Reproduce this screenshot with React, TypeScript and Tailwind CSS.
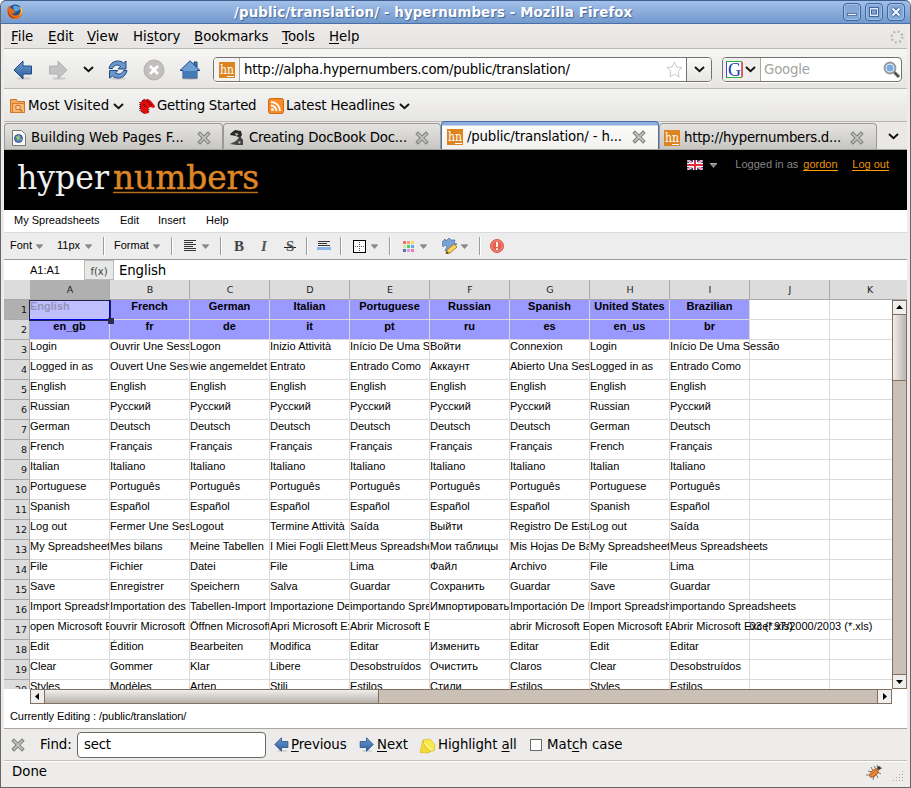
import React from "react";

const columns = ["A", "B", "C", "D", "E", "F", "G", "H", "I", "J", "K"];

const rows: string[][] = [
  ["English", "French", "German", "Italian", "Portuguese", "Russian", "Spanish", "United States", "Brazilian"],
  ["en_gb", "fr", "de", "it", "pt", "ru", "es", "en_us", "br"],
  ["Login", "Ouvrir Une Session", "Logon", "Inizio Attività", "Início De Uma Sessão", "Войти", "Connexion", "Login", "Início De Uma Sessão"],
  ["Logged in as", "Ouvert Une Session", "wie angemeldet", "Entrato", "Entrado Como", "Аккаунт", "Abierto Una Sesión", "Logged in as", "Entrado Como"],
  ["English", "English", "English", "English", "English", "English", "English", "English", "English"],
  ["Russian", "Русский", "Русский", "Русский", "Русский", "Русский", "Русский", "Russian", "Русский"],
  ["German", "Deutsch", "Deutsch", "Deutsch", "Deutsch", "Deutsch", "Deutsch", "German", "Deutsch"],
  ["French", "Français", "Français", "Français", "Français", "Français", "Français", "French", "Français"],
  ["Italian", "Italiano", "Italiano", "Italiano", "Italiano", "Italiano", "Italiano", "Italian", "Italiano"],
  ["Portuguese", "Português", "Português", "Português", "Português", "Português", "Português", "Portuguese", "Português"],
  ["Spanish", "Español", "Español", "Español", "Español", "Español", "Español", "Spanish", "Español"],
  ["Log out", "Fermer Une Session", "Logout", "Termine Attività", "Saída", "Выйти", "Registro De Estancias", "Log out", "Saída"],
  ["My Spreadsheets", "Mes bilans", "Meine Tabellen", "I Miei Fogli Elettronici", "Meus Spreadsheets", "Мои таблицы", "Mis Hojas De Balance", "My Spreadsheets", "Meus Spreadsheets"],
  ["File", "Fichier", "Datei", "File", "Lima", "Файл", "Archivo", "File", "Lima"],
  ["Save", "Enregistrer", "Speichern", "Salva", "Guardar", "Сохранить", "Guardar", "Save", "Guardar"],
  ["Import Spreadsheets", "Importation des Bilans", "Tabellen-Import", "Importazione Dei Fogli", "importando Spreadsheets", "Импортировать", "Importación De Hojas", "Import Spreadsheets", "importando Spreadsheets"],
  ["open Microsoft Excel 97/2000/2003 (*.xls)", "ouvrir Microsoft Excel", "Öffnen Microsoft Excel", "Apri Microsoft Excel", "Abrir Microsoft Excel", "", "abrir Microsoft Excel", "open Microsoft Excel", "Abrir Microsoft Excel 97/2000/2003 (*.xls)"],
  ["Edit", "Édition", "Bearbeiten", "Modifica", "Editar", "Изменить", "Editar", "Edit", "Editar"],
  ["Clear", "Gommer", "Klar", "Libere", "Desobstruídos", "Очистить", "Claros", "Clear", "Desobstruídos"],
  ["Styles", "Modèles", "Arten", "Stili", "Estilos", "Стили", "Estilos", "Styles", "Estilos"],
];

function Key({ children }: { children: string }) {
  return <span className="underline decoration-1 underline-offset-2">{children}</span>;
}

function Chevron() {
  return (
    <svg className="shrink-0" width="11" height="7" viewBox="0 0 11 7">
      <path d="M1 1l4.500 4.200L10 1" fill="none" stroke="#111" strokeWidth="1.900" />
    </svg>
  );
}

function Tri() {
  return (
    <svg className="shrink-0" width="7" height="5" viewBox="0 0 7 5">
      <path d="M0 0h7v1L3.500 5 0 1z" fill="#888" />
      <path d="M0 .5h7" stroke="#aaa" />
    </svg>
  );
}

function Cross() {
  return (
    <svg className="shrink-0" width="14" height="14" viewBox="0 0 14 14">
      <path d="M3 3l8 8M11 3l-8 8" stroke="#7c7e78" strokeWidth="3.800" strokeLinecap="square" />
      <path d="M3 3l8 8M11 3l-8 8" stroke="#bfc1bc" strokeWidth="1.800" strokeLinecap="square" />
    </svg>
  );
}

function Hn() {
  return (
    <svg className="shrink-0" width="16" height="16" viewBox="0 0 16 16">
      <rect width="16" height="16" fill="#db8420" />
      <text x="1" y="12" fontFamily="DejaVu Serif" fontSize="12" fill="#fff" textLength="14" lengthAdjust="spacingAndGlyphs">hn</text>
      <path d="M8 14.500h7" stroke="#fff" />
    </svg>
  );
}

function Arrow({ right, gray, size }: { right?: boolean; gray?: boolean; size: number }) {
  return (
    <svg className="shrink-0" width={size} height={size} viewBox="0 0 20 20">
      <defs>
        <linearGradient id="arrowBlue" x1="0" y1="0" x2="0" y2="1">
          <stop offset="0" stopColor="#6d9bd0" />
          <stop offset="1" stopColor="#2c5e9f" />
        </linearGradient>
      </defs>
      <ellipse cx="11" cy="18.500" rx="7" ry="1.300" fill="#000" opacity=".12" />
      <path
        d="M1 10l9-9v5h8.500v8H10v5z"
        transform={right ? "translate(20 0) scale(-1 1)" : undefined}
        fill={gray ? "#c2c2c2" : "url(#arrowBlue)"}
        stroke={gray ? "#b2b2b2" : "#204a87"}
      />
    </svg>
  );
}

function Firefox() {
  return (
    <svg width="16" height="16" viewBox="0 0 16 16">
      <circle cx="8" cy="7.500" r="7" fill="#234f91" />
      <path d="M6 2c3-1 6 0 7 3-1 2-4 3-6 2z" fill="#58a5da" />
      <path d="M1 3C-1 9 2 15 8 15c5 0 8-4 7-9l-1-3c0 3 0 6-3 8-3 1-6 0-6-2 2 1 3 0 4-1-3 0-2-2-3-3C4 5 3 4 3 2 1 2 1 3 1 3z" fill="#e86a14" />
      <path d="M12 3c3 3 2 7-1 9 4-1 5-5 4-7-1-2-2-2-3-2z" fill="#ffc936" />
      <path d="M1 5c0 5 3 8 7 9-5 1-8-4-7-9z" fill="#a92f0b" />
    </svg>
  );
}

function Refresh() {
  return (
    <svg width="20" height="20" viewBox="0 0 20 20">
      <ellipse cx="10" cy="18.700" rx="8" ry="1.200" fill="#000" opacity=".12" />
      <g fill="#6a98cd" stroke="#204a87" strokeLinejoin="round">
        <path d="M1 8.500C2 4 5 1 10 1c2 0 4 .7 5.500 2L18 1v8h-8l2.600-2.600C9 4 6 5 4.500 8.500z" />
        <path d="M19 10.500C18 15 15 18 10 18c-2 0-4-.7-5.500-2L1.500 18v-7.500H10L7.400 13c3.600 2 6.600 1 8.100-2.500z" />
      </g>
    </svg>
  );
}

function Home() {
  return (
    <svg width="22" height="20" viewBox="0 0 22 20">
      <ellipse cx="11" cy="18.800" rx="9" ry="1.100" fill="#000" opacity=".15" />
      <path d="M15 2h3v5l-3-3z" fill="#457ab9" stroke="#204a87" />
      <path d="M1 10.500L11 .8l10 9.700h-3V18H4v-7.500z" fill="#6e9ed4" stroke="#204a87" />
      <path d="M5 11h12v6H5z" fill="#4279b9" />
    </svg>
  );
}

function Search() {
  return (
    <svg width="18" height="18" viewBox="0 0 18 18">
      <path d="M10 10l6 6" stroke="#555" strokeWidth="3" />
      <circle cx="7" cy="7" r="5.500" fill="#8fb9e3" stroke="#999" strokeWidth="1.800" />
      <circle cx="7" cy="7" r="4" fill="#7aabe0" stroke="#d8eafa" />
    </svg>
  );
}

function Feed() {
  return (
    <svg width="16" height="16" viewBox="0 0 16 16">
      <rect x=".5" y=".5" width="15" height="15" rx="2" fill="#f68b28" stroke="#cf6812" />
      <path d="M3 4c5 0 9 4 9 9M3 7.500c3 0 5.500 2.500 5.500 5.500" fill="none" stroke="#fff" strokeWidth="1.800" />
      <circle cx="4.500" cy="11.500" r="1.500" fill="#fff" />
    </svg>
  );
}

function Tab({ icon, text, active, w, textW }: { icon: React.ReactNode; text: string; active?: boolean; w: string; textW: string }) {
  return (
    <div
      className={
        "flex shrink-0 items-center overflow-hidden rounded-t-[4px] border border-b-0 " + w +
        (active
          ? " h-[28px] border-[#4b6fa5] bg-[linear-gradient(#8db0e1_0_3px,#fcfcfb_4px,#f1f0ee)] pl-[5px] pt-[3px]"
          : " h-[26px] border-[#9b9a96] bg-linear-to-b from-[#e5e4e2] to-[#c8c6c2] pl-[5px] pt-[2px]")
      }
    >
      {icon}
      <span className={"ml-[4px] shrink-0 whitespace-nowrap " + textW}>{text}</span>
      <Cross />
    </div>
  );
}

function TitleButton({ children }: { children: React.ReactNode }) {
  return (
    <div className="flex h-[18px] w-[18px] items-center justify-center rounded-[4px] border border-[#3d669f] bg-[#84a7d8] shadow-[inset_0_0_0_1px_#a3c0e8]">
      <svg width="12" height="12" viewBox="0 0 12 12">{children}</svg>
    </div>
  );
}

function TitleBar() {
  return (
    <div className="flex h-[24px] items-center rounded-t-[5px] border-b border-t border-b-[#4a6ea5] border-t-[#3f5f8f] bg-linear-to-b from-[#a2c0e9] to-[#7399cd] pl-[6px] pr-[5px]">
      <Firefox />
      <div className="grow whitespace-nowrap pl-[211px] pt-[2px] text-[13.33px] font-bold tracking-[0.12px] text-white [text-shadow:1px_1px_1px_#41669b]">
        /public/translation/ - hypernumbers - Mozilla Firefox
      </div>
      <div className="flex gap-[4px]">
        <TitleButton><rect x="1.500" y="7.500" width="9" height="2" fill="#eef5ff" stroke="#41669b" strokeWidth=".8" /></TitleButton>
        <TitleButton>
          <rect x="1.500" y="1.500" width="9" height="9" fill="#dbe9fb" stroke="#41669b" />
          <rect x="3.500" y="4" width="5" height="4" fill="#84a7d8" stroke="#41669b" />
        </TitleButton>
        <TitleButton>
          <path d="M2.500 2.500l7 7M9.500 2.500l-7 7" stroke="#41669b" strokeWidth="4" />
          <path d="M2.500 2.500l7 7M9.500 2.500l-7 7" stroke="#eef5ff" strokeWidth="2.200" />
        </TitleButton>
      </div>
    </div>
  );
}

function MenuBar() {
  return (
    <div className="flex h-[25px] items-center border-b border-[#b9b8b5] bg-linear-to-b from-[#ecebea] to-[#e6e5e3] pl-[7px] pr-[3px] pt-[2px]">
      <span className="w-[37px]"><Key>F</Key>ile</span>
      <span className="w-[39px]"><Key>E</Key>dit</span>
      <span className="w-[46px]"><Key>V</Key>iew</span>
      <span className="w-[61px]">Hi<Key>s</Key>tory</span>
      <span className="w-[88px]"><Key>B</Key>ookmarks</span>
      <span className="w-[47px]"><Key>T</Key>ools</span>
      <span className="grow"><Key>H</Key>elp</span>
      <svg width="14" height="14" viewBox="0 0 14 14">
        <circle cx="7" cy="7" r="5.400" fill="none" stroke="#b5b4b2" strokeWidth="2.400" strokeDasharray="1.800 2.441" />
      </svg>
    </div>
  );
}

function NavBar() {
  return (
    <div className="flex h-[40px] items-center border-b border-[#b9b8b5] bg-linear-to-b from-[#f6f6f5] to-[#e6e5e3] pl-[9px] pt-[2px]">
      <div className="flex w-[35px]"><Arrow size={20} /></div>
      <div className="flex w-[35px]"><Arrow size={20} right gray /></div>
      <div className="flex w-[25px]"><Chevron /></div>
      <div className="flex w-[35px]"><Refresh /></div>
      <div className="flex w-[36px]">
        <svg width="22" height="22" viewBox="0 0 22 22">
          <circle cx="11" cy="11" r="10" fill="#c3bfbf" stroke="#b3afaf" />
          <path d="M7 7l8 8M15 7l-8 8" stroke="#fff" strokeWidth="2.600" />
        </svg>
      </div>
      <div className="flex w-[34px]"><Home /></div>
      <div className="flex h-[25px] w-[499px] items-center overflow-hidden rounded-[4px] border border-[#73726e] bg-white shadow-[0_1px_0_#fff]">
        <div className="flex h-full w-[26px] items-center border-r border-[#a8a7a4] bg-[#f4f3f1] pl-[5px]"><Hn /></div>
        <div className="grow whitespace-nowrap pl-[4px] tracking-[-0.235px]">http://alpha.hypernumbers.com/public/translation/</div>
        <svg className="mr-[3px]" width="17" height="17" viewBox="0 0 17 17">
          <path d="M8.500 1l2.300 5 5.200.6-4 3.700 1.200 5.500-4.700-2.700-4.700 2.700L5 10.300 1 6.600 6.200 6z" fill="#fff" stroke="#c8c8c8" />
        </svg>
        <div className="flex h-full w-[25px] items-center justify-center border-l border-[#73726e] bg-linear-to-b from-[#f9f9f8] to-[#e8e7e5]"><Chevron /></div>
      </div>
      <div className="ml-[10px] flex h-[25px] w-[180px] items-center overflow-hidden rounded-[4px] border border-[#73726e] bg-white shadow-[0_1px_0_#fff]">
        <div className="flex h-full w-[38px] items-center gap-[2px] border-r border-[#a8a7a4] bg-[#efeeec] pl-[3px]">
          <svg width="17" height="17" viewBox="0 0 17 17">
            <rect x="1" y="1" width="15" height="15" fill="#fff" />
            <path d="M.5 1v15" stroke="#2c55c8" /><path d="M0 .5h16M0 16.500h16" stroke="#2fae34" /><path d="M16 1v15" stroke="#cf3030" strokeWidth="1.500" />
            <text x="2" y="14.500" fontFamily="Liberation Serif" fontSize="18" fill="#163bb2">G</text>
          </svg>
          <Chevron />
        </div>
        <span className="grow pl-[3px] tracking-[-0.2px] text-[#a4a3a1]">Google</span>
        <Search />
      </div>
    </div>
  );
}

function BookmarkBar() {
  return (
    <div className="flex h-[33px] items-center border-b border-[#b9b8b5] bg-linear-to-b from-[#f4f4f3] to-[#e6e5e3] pl-[6px] pt-[2px]">
      <svg width="16" height="16" viewBox="0 0 16 16">
        <path d="M.500 14.500V1.500h6l1 2h7v11z" fill="#f3aa5b" stroke="#c9742b" />
        <rect x="2.500" y="5.500" width="12" height="9" fill="#f7b871" stroke="#c9742b" strokeWidth=".8" />
        <circle cx="8" cy="9.500" r="2.300" fill="#fbd5a8" stroke="#c9651b" /><path d="M10 11.500l2 2" stroke="#c9651b" strokeWidth="1.500" />
      </svg>
      <span className="ml-[2px] w-[85px]">Most Visited</span>
      <div className="flex w-[26px]"><Chevron /></div>
      <svg width="17" height="16" viewBox="0 0 17 16">
        <path d="M1 5l3-3 5-1 3 2 4 5-1 2-4-1-2 2 1 4-5 1-4-5z" fill="#e00b0b" />
        <path d="M1 4v9l4 2M3 3l3-2M9 14l1-3M8 3l3 3 2 1M5 6l1 3" fill="none" stroke="#2b0000" strokeWidth="1.200" strokeDasharray="1 1" />
      </svg>
      <span className="ml-px w-[111px] whitespace-nowrap tracking-[-0.25px]">Getting Started</span>
      <Feed />
      <span className="ml-[2px] w-[113px] whitespace-nowrap tracking-[-0.15px]">Latest Headlines</span>
      <Chevron />
    </div>
  );
}

function TabBar() {
  return (
    <div className="flex h-[28px] items-end border-b border-[#a3a29e] bg-[#e9e8e6]">
      <Tab w="w-[219px]" textW="w-[166px] tracking-[-0.02px]" text="Building Web Pages F..." icon={
        <svg className="ml-px shrink-0" width="16" height="16" viewBox="0 0 16 16">
          <path d="M1.500.500h9l4 4v11h-13z" fill="#fafafa" stroke="#777" />
          <circle cx="7.500" cy="8.500" r="4" fill="#527db8" stroke="#355a91" /><path d="M5 7l3-2 1 3-2 3zM9 9l2 0-1 2z" fill="#9bc86c" />
        </svg>
      } />
      <Tab w="w-[218px]" textW="w-[166px] tracking-[-0.2px]" text="Creating DocBook Doc..." icon={
        <svg className="shrink-0" width="16" height="16" viewBox="0 0 16 16">
          <path d="M2 3l4-3 6 1 1 4-2 3-4-2-6-1z" fill="#282828" />
          <path d="M4 13l4-3 3-4 3 4v5H7zM1 14l4-2 3 3z" fill="#444" /><path d="M6 3l4 1-3 2zM9 11l3 1-2 2z" fill="#bcbcbc" />
        </svg>
      } />
      <Tab w="w-[218px]" textW="w-[165px] tracking-[-0.18px]" active text="/public/translation/ - h..." icon={<Hn />} />
      <Tab w="w-[218px]" textW="w-[166px] tracking-[-0.27px]" text="http://hypernumbers.d..." icon={<span className="-ml-px"><Hn /></span>} />
      <div className="flex h-full grow items-center justify-center pl-[2px] pt-px"><Chevron /></div>
    </div>
  );
}

function Header() {
  return (
    <div className="flex h-[60px] justify-between bg-black pl-[13px] pr-[18px] text-[11px] text-[#868686]">
      <svg className="mt-[6px]" width="250" height="50" viewBox="0 0 250 50">
        <text x="0" y="33" fontFamily="DejaVu Serif" fontSize="33" fill="#f0f0f0" textLength="92" lengthAdjust="spacingAndGlyphs">hyper</text>
        <text x="96" y="33" fontFamily="DejaVu Serif" fontSize="33" fill="#de8526" stroke="#de8526" strokeWidth=".5" textLength="146" lengthAdjust="spacingAndGlyphs">numbers</text>
        <path d="M96 36.500h145" stroke="#b76d1e" strokeWidth="1.500" />
      </svg>
      <div className="flex h-[28px] items-center">
        <svg className="mt-px" width="16" height="10" viewBox="0 0 16 10">
          <rect width="16" height="10" fill="#283b87" />
          <path d="M0 0l16 10M16 0L0 10" stroke="#fff" strokeWidth="2.200" />
          <path d="M0 0l16 10M16 0L0 10" stroke="#d84050" strokeWidth=".8" />
          <path d="M8 0v10M0 5h16" stroke="#fff" strokeWidth="4" /><path d="M8 0v10M0 5h16" stroke="#dc3040" strokeWidth="2" />
        </svg>
        <span className="ml-[7px] mt-[2px]"><Tri /></span>
        <span className="ml-[18px] w-[68px]">Logged in as</span>
        <span className="w-[49px]"><span className="border-b border-[#f90] leading-[12px] text-[#e8950f]">gordon</span></span>
        <span><span className="border-b border-[#f90] leading-[12px] text-[#e8950f]">Log out</span></span>
      </div>
    </div>
  );
}

function Separator() {
  return <span className="h-[18px] w-[2px] border-l border-[#9b9b9b] bg-white" />;
}

function Toolbar() {
  return (
    <div className="flex h-[28px] items-center border-b border-t border-b-[#999] border-t-[#dadada] bg-[#ededed] pl-[6px]">
      <span className="-mt-[2px] w-[26px]">Font</span><Tri />
      <span className="-mt-[2px] ml-[14px] w-[28px]">11px</span><Tri />
      <span className="ml-[11px] flex w-[11px]"><Separator /></span>
      <span className="-mt-[2px] w-[39px]">Format</span><Tri />
      <span className="ml-[11px] flex w-[13px]"><Separator /></span>
      <svg width="13" height="12" viewBox="0 0 13 12"><path d="M0 .500h12M0 2.500h9M0 4.500h12M0 6.500h9M0 8.500h12M0 10.500h12" stroke="#333" /></svg>
      <span className="ml-[5px]"><Tri /></span>
      <span className="ml-[11px] flex w-[14px]"><Separator /></span>
      <span className="w-[27px] font-['Liberation_Serif',serif] text-[15px] font-bold text-[#444]">B</span>
      <span className="w-[23px] font-['Liberation_Serif',serif] text-[15px] font-bold italic text-[#555]">I</span>
      <span className="flex w-[22px]">
        <span className="bg-[linear-gradient(#222,#222)] bg-[length:100%_1px] bg-[position:0_10px] bg-no-repeat px-[2px] font-['Liberation_Serif',serif] text-[15px] font-bold text-[#555]">S</span>
      </span>
      <span className="flex w-[11px]"><Separator /></span>
      <svg width="14" height="10" viewBox="0 0 14 10"><path d="M1 .500h12M1 2.500h9M1 4.500h12" stroke="#333" /><rect y="6" width="14" height="3" fill="#8ab3ec" /></svg>
      <span className="ml-[9px] flex w-[13px]"><Separator /></span>
      <svg width="13" height="13" viewBox="0 0 13 13"><rect x=".500" y=".500" width="12" height="12" fill="#fff" stroke="#000" /><path d="M6.500 2v9M2 6.500h9" stroke="#555" strokeDasharray="1 1" /></svg>
      <span className="ml-[5px]"><Tri /></span>
      <span className="ml-[11px] flex w-[14px]"><Separator /></span>
      <svg width="11" height="11" viewBox="0 0 11 11">
        <path fill="#f46d6d" d="M0 0h3v3H0z" /><path fill="#f6a065" d="M4 0h3v3H4z" /><path fill="#f3d861" d="M8 0h3v3H8z" />
        <path fill="#cce9a7" d="M0 4h3v3H0z" /><path fill="#57c96b" d="M4 4h3v3H4z" /><path fill="#60aceb" d="M8 4h3v3H8z" />
        <path fill="#5177b4" d="M0 8h3v3H0z" /><path fill="#d59be4" d="M4 8h3v3H4z" /><path fill="#f675ae" d="M8 8h3v3H8z" />
      </svg>
      <span className="ml-[6px]"><Tri /></span>
      <svg className="ml-[15px]" width="16" height="16" viewBox="0 0 16 16">
        <path d="M0 4l3-3 1 2 3-3 2 2 4 0-1 3 3 1-3 2-3 0-3 4-3 1 2-5-2-1-2 2z" fill="#7aa3d3" stroke="#456f9f" strokeWidth=".7" />
        <path d="M4 16l1-4 7-6 3 3-7 6z" fill="#f6d35f" stroke="#9a6a16" strokeWidth=".8" />
        <path d="M4 16l.8-3L7 15z" fill="#5b3b10" />
      </svg>
      <span className="ml-[3px]"><Tri /></span>
      <span className="ml-[11px] flex w-[11px]"><Separator /></span>
      <svg width="14" height="14" viewBox="0 0 14 14"><circle cx="7" cy="7" r="6.500" fill="#e5604e" stroke="#d9594a" /><circle cx="7" cy="7" r="5.300" fill="none" stroke="#f4a192" strokeWidth=".8" /><path d="M7 3v5M7 9.300v1.700" stroke="#fff" strokeWidth="1.800" /></svg>
    </div>
  );
}

function ScrollTri({ d }: { d: string }) {
  return <svg width="7" height="7" viewBox="0 0 7 7"><path d={d} fill="#000" /></svg>;
}

function Sheet() {
  return (
    <div className="font-['Liberation_Sans',Arial,sans-serif] text-[11px] leading-[13px]">
      <div className="flex h-[20px] overflow-hidden border-b border-[#a9a9a9] bg-[#dcdcdc] font-['DejaVu_Sans',sans-serif] text-[9.500px] leading-[19px] text-[#222]">
        <div className="w-[26px] shrink-0 border-r border-[#dcdcdc]" />
        {columns.map((c) => (
          <div key={c} className={"w-[80px] shrink-0 border-r border-[#aaa] pl-px text-center " + (c === "A" ? "bg-[#b0b0b0]" : "")}>{c}</div>
        ))}
      </div>
      <div className="flex h-[389px]">
        <div className="relative w-[888px] overflow-hidden">
          {rows.map((row, r) => (
            <div key={r} className="flex h-[20px]">
              <div className={"h-[20px] w-[26px] shrink-0 border-b border-r border-[#aaa] pr-[2px] pt-px text-right font-['DejaVu_Sans',sans-serif] text-[9.500px] leading-[17px] text-[#111] " + (r === 0 ? "bg-[#b0b0b0]" : "bg-[#dcdcdc]")}>{r + 1}</div>
              {columns.map((c, i) => (
                <div
                  key={c}
                  className={
                    "h-[20px] w-[80px] shrink-0 whitespace-nowrap border-b border-r border-[#dadada] " +
                    (r < 2 && i < 9 ? "bg-[#9999ff] text-center font-bold " : "") +
                    (i === 8 ? "" : "overflow-hidden")
                  }
                >
                  {r === 16 && i === 9 ? <span className="-ml-[160px] tracking-[-0.02px]">open Microsoft Excel 97/2000/2003 (*.xls)</span> : r === 0 && i === 0 ? null : row[i]}
                </div>
              ))}
            </div>
          ))}
          <div className="absolute left-[25px] top-0 h-[21px] w-[82px] border border-[#222244] bg-[#bfbfff] font-bold text-[#9393b8] shadow-[inset_-1px_-1px_0_#0000d8]">
            <span className="relative -top-px">English</span>
          </div>
          <div className="absolute left-[104px] top-[18px] h-[6px] w-[6px] bg-[#2c2c50]" />
        </div>
        <div className="flex w-[15px] flex-col border border-[#7f7062] bg-[#cbc0b6]">
          <div className="flex h-[14px] items-center justify-center border-b border-[#7f7062] bg-[#f1efed]"><ScrollTri d="M0 5l3.500-4L7 5z" /></div>
          <div className="h-[66px] border-b border-[#7f7062] bg-linear-to-r from-[#efedeb] to-[#bdb6b0]" />
          <div className="grow" />
          <div className="flex h-[14px] items-center justify-center border-t border-[#7f7062] bg-[#f1efed]"><ScrollTri d="M0 2l3.500 4L7 2z" /></div>
        </div>
      </div>
      <div className="ml-[26px] flex h-[15px] w-[862px] border border-[#7f7062] bg-[#cbc0b6]">
        <div className="flex w-[14px] items-center justify-center border-r border-[#7f7062] bg-[#f1efed]"><ScrollTri d="M5 0L1 3.500 5 7z" /></div>
        <div className="w-[334px] border-r border-[#7f7062] bg-linear-to-b from-[#f0eeec] to-[#b9b2ac]" />
        <div className="grow" />
        <div className="flex w-[14px] items-center justify-center border-l border-[#7f7062] bg-[#f1efed]"><ScrollTri d="M2 0l4 3.500L2 7z" /></div>
      </div>
      <div className="h-[24px] pl-[6px] leading-[25px] tracking-[-0.07px]">Currently Editing : /public/translation/</div>
    </div>
  );
}

function FindBar() {
  return (
    <div className="flex h-[32px] items-center border-t border-[#a7a6a3] bg-[#edecea] pl-[7px]">
      <Cross />
      <span className="ml-[15px] w-[37px]">Find:</span>
      <div className="h-[26px] w-[189px] rounded-[4px] border border-[#696864] bg-white pl-[6px] leading-[23px] tracking-[-0.2px]">sect</div>
      <span className="ml-[8px] flex w-[17px]"><Arrow size={15} /></span>
      <span className="w-[68px] tracking-[-0.1px]"><Key>P</Key>revious</span>
      <span className="flex w-[18px]"><Arrow size={15} right /></span>
      <span className="w-[42px]"><Key>N</Key>ext</span>
      <svg className="mt-[2px]" width="18" height="16" viewBox="0 0 18 16">
        <path d="M1 14.500L4 2l3 7 5 4-2 2z" fill="#f3dc35" stroke="#d6b91e" strokeWidth=".7" />
        <path d="M4 2l7-1 5 6-1 6-5 0-4-5z" fill="#f8e94d" stroke="#d6b91e" strokeWidth=".7" /><path d="M5 5l8 7" stroke="#fffbd0" />
      </svg>
      <span className="ml-px w-[92px] whitespace-nowrap tracking-[-0.1px]">Highlight <Key>a</Key>ll</span>
      <span className="h-[12px] w-[12px] border border-[#696864] bg-white" />
      <span className="ml-[5px]">Mat<Key>c</Key>h case</span>
    </div>
  );
}

function StatusBar() {
  return (
    <div className="flex h-[27px] items-center border-t border-[#c1c0bd] bg-[#edecea] pl-[8px] pr-[3px] shadow-[inset_0_1px_0_#fff]">
      <span className="-mt-[4px] grow">Done</span>
      <svg className="-mt-[4px]" width="17" height="17" viewBox="0 0 17 17">
        <path d="M2 7l4 1M5 3l2 4M0 11h5M7 16l1-4M12 14l-2-4M15 10l-4-2M8 2l2 3M12 4l-1-3M13 5l3-1" stroke="#777" />
        <ellipse cx="8" cy="9" rx="5.500" ry="2.700" transform="rotate(-42 8 9)" fill="#ed8d3a" stroke="#a84d18" strokeWidth=".8" />
        <circle cx="13" cy="4" r="1.800" fill="#333" /><path d="M5 11l6-5M7 13l6-5" stroke="#9e4a17" strokeWidth=".6" />
      </svg>
      <svg className="ml-[9px] mt-[6px]" width="12" height="12" viewBox="0 0 12 12">
        <path d="M10.500 0v12M7.500 3v9M4.500 6v6M1.500 9v3" stroke="#aaa9a6" strokeDasharray="1 2" />
      </svg>
    </div>
  );
}

export default function App() {
  return (
    <div className="h-[788px] w-[911px] overflow-hidden bg-white font-['DejaVu_Sans',sans-serif] text-[13.33px] leading-[18px] text-black">
      <div className="h-[788px] rounded-t-[6px] border border-t-0 border-[#666] bg-[#edecea]">
        <TitleBar />
        <div className="mx-[3px]">
          <MenuBar />
          <NavBar />
          <BookmarkBar />
          <TabBar />
          <div className="bg-white font-['Liberation_Sans',Arial,sans-serif] text-[11px]">
            <Header />
            <div className="flex h-[22px] items-center pb-[2px] pl-[10px] text-[11px]">
              <span className="w-[106px]">My Spreadsheets</span>
              <span className="w-[38px]">Edit</span>
              <span className="w-[48px]">Insert</span>
              <span>Help</span>
            </div>
            <Toolbar />
            <div className="flex h-[20px] items-center">
              <div className="w-[80px] pl-[2px] text-center">A1:A1</div>
              <div className="h-[20px] w-[30px] border border-[#bbb] bg-[#e8e8e8] text-center font-['DejaVu_Sans',sans-serif] text-[10px] leading-[21px] text-[#444]">f(x)</div>
              <div className="pl-[5px] pt-[2px] font-['DejaVu_Sans',sans-serif] text-[13.33px] tracking-[-0.15px]">English</div>
            </div>
            <Sheet />
          </div>
          <FindBar />
          <StatusBar />
        </div>
      </div>
    </div>
  );
}
